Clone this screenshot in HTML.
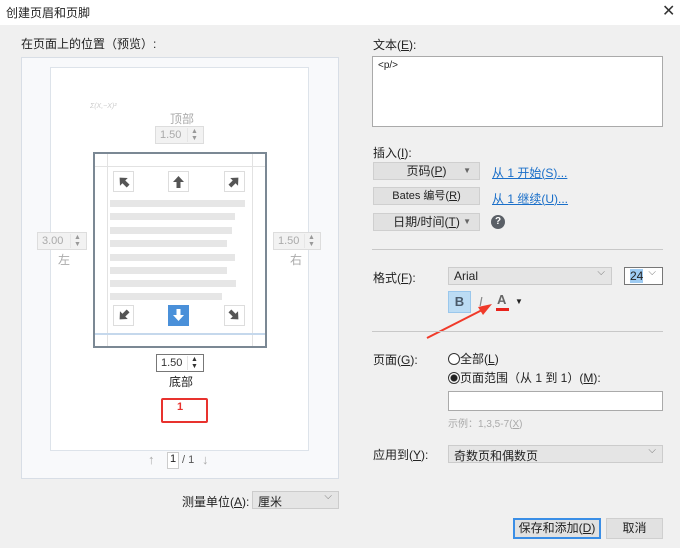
<!DOCTYPE html><html><head><meta charset="utf-8"><style>
*{margin:0;padding:0;box-sizing:border-box}
body{width:680px;height:548px;background:#f0f0f0;position:relative;overflow:hidden;font-family:"Liberation Sans","Noto Sans CJK SC",sans-serif;font-size:12px;color:#222}
.a{position:absolute;white-space:nowrap}
.spin{position:absolute;height:18px;border:1px solid #ddd;background:#f2f2f2;color:#aaa;font-size:11px;padding:2px 4px}
.spin i{position:absolute;right:2px;top:1px;width:14px;height:14px;border-left:1px solid #e6e6e6;font-style:normal;font-size:7px;line-height:7px;text-align:center;color:#999}
.ab{position:absolute;width:21px;height:21px;border:1px solid #ddd;background:#fff}
.ab svg{position:absolute;left:2px;top:2px}
.ln{position:absolute;left:110px;height:7px;background:#e6e6e6}
.btn{position:absolute;left:373px;width:107px;height:18px;background:#e1e1e1;border:1px solid #cfcfcf;font-size:12px;text-align:center;line-height:16px}
.btn b{position:absolute;right:8px;top:0;font-size:8px;color:#666;font-weight:normal}
.lk{position:absolute;left:492px;color:#1a6fc9;text-decoration:underline;font-size:12px}
.sep{position:absolute;left:372px;width:291px;height:1px;background:#c8c8c8}
.dd{position:absolute;height:18px;background:#e5e5e5;border:1px solid #ccc;padding:1px 5px;font-size:12px}
.dd:after{content:"⌵";position:absolute;right:6px;top:-1px;color:#777;font-size:10px}
</style></head><body>
<svg width="0" height="0" style="position:absolute"><defs><g id="ar"><path d="M7.5 2 L13 8 L9.5 8 L9.5 14 L5.5 14 L5.5 8 L2 8 Z"/></g></defs></svg>
<div class="a" style="left:0;top:0;width:680px;height:25px;background:#fff"></div>
<div class="a" style="left:6px;top:4px">创建页眉和页脚</div>
<div class="a" style="left:662px;top:1px;font-size:16px;color:#333">✕</div>

<div class="a" style="left:21px;top:35px">在页面上的位置（预览）:</div>
<div class="a" style="left:21px;top:57px;width:318px;height:422px;background:#f8f9fb;border:1px solid #d8dee6"></div>
<div class="a" style="left:50px;top:67px;width:259px;height:384px;background:#fff;border:1px solid #dde3ea"></div>
<div class="a" style="left:90px;top:103px;font-size:7px;color:#ccc;font-style:italic">Σ(X,−X)²</div>
<div class="a" style="left:170px;top:110px;color:#aaa">顶部</div>
<div class="spin" style="left:155px;top:126px;width:49px">1.50<i>▲<br>▼</i></div>
<div class="spin" style="left:37px;top:232px;width:50px">3.00<i>▲<br>▼</i></div>
<div class="a" style="left:58px;top:251px;color:#aaa">左</div>
<div class="spin" style="left:273px;top:232px;width:48px">1.50<i>▲<br>▼</i></div>
<div class="a" style="left:290px;top:251px;color:#aaa">右</div>

<div class="a" style="left:93px;top:152px;width:174px;height:196px;background:#fff;border:2px solid #7b8894"></div>
<div class="a" style="left:107px;top:154px;width:1px;height:192px;background:#e2e2e2"></div>
<div class="a" style="left:252px;top:154px;width:1px;height:192px;background:#e2e2e2"></div>
<div class="a" style="left:95px;top:166px;width:170px;height:1px;background:#e2e2e2"></div>
<div class="a" style="left:95px;top:333px;width:170px;height:2px;background:#c5d8ec"></div>
<div class="ab" style="left:113px;top:171px"><svg width="15" height="15" fill="#555"><use href="#ar" transform="rotate(-45 7.5 7.5)"/></svg></div>
<div class="ab" style="left:168px;top:171px"><svg width="15" height="15" fill="#555"><use href="#ar"/></svg></div>
<div class="ab" style="left:224px;top:171px"><svg width="15" height="15" fill="#555"><use href="#ar" transform="rotate(45 7.5 7.5)"/></svg></div>
<div class="ln" style="top:200px;width:135px"></div>
<div class="ln" style="top:213px;width:125px"></div>
<div class="ln" style="top:227px;width:122px"></div>
<div class="ln" style="top:240px;width:117px"></div>
<div class="ln" style="top:254px;width:125px"></div>
<div class="ln" style="top:267px;width:117px"></div>
<div class="ln" style="top:280px;width:126px"></div>
<div class="ln" style="top:293px;width:112px"></div>
<div class="ab" style="left:113px;top:305px"><svg width="15" height="15" fill="#555"><use href="#ar" transform="rotate(-135 7.5 7.5)"/></svg></div>
<div class="ab" style="left:168px;top:305px;background:#4a90d9;border-color:#4a90d9"><svg width="15" height="15" fill="#fff"><use href="#ar" transform="rotate(180 7.5 7.5)"/></svg></div>
<div class="ab" style="left:224px;top:305px"><svg width="15" height="15" fill="#555"><use href="#ar" transform="rotate(135 7.5 7.5)"/></svg></div>
<div class="spin" style="left:156px;top:354px;width:48px;background:#fff;border-color:#777;color:#333">1.50<i style="color:#333">▲<br>▼</i></div>
<div class="a" style="left:169px;top:373px">底部</div>
<div class="a" style="left:161px;top:398px;width:47px;height:25px;border:2px solid #e8322e;border-radius:2px"></div>
<div class="a" style="left:177px;top:401px;color:#e8322e;font-size:11px;font-weight:bold">1</div>
<div class="a" style="left:148px;top:452px;color:#aaa;font-size:13px">↑</div>
<div class="a" style="left:167px;top:452px;width:12px;height:17px;border:1px solid #ccc;background:#fff;font-size:11px;text-align:center">1</div>
<div class="a" style="left:182px;top:454px;font-size:11px;color:#555">/ 1</div>
<div class="a" style="left:202px;top:452px;color:#aaa;font-size:13px">↓</div>
<div class="a" style="left:182px;top:493px">测量单位(<u>A</u>):</div>
<div class="dd" style="left:252px;top:491px;width:87px">厘米</div>

<div class="a" style="left:373px;top:36px">文本(<u>E</u>):</div>
<div class="a" style="left:372px;top:56px;width:291px;height:71px;background:#fff;border:1px solid #aaa;padding:3px 5px;font-size:10px">&lt;p/&gt;</div>
<div class="a" style="left:373px;top:144px">插入(<u>I</u>):</div>
<div class="btn" style="top:162px">页码(<u>P</u>)<b>▼</b></div>
<div class="lk" style="top:164px">从 1 开始(<u>S</u>)...</div>
<div class="btn" style="top:187px;font-size:11px">Bates 编号(<u>R</u>)</div>
<div class="lk" style="top:190px">从 1 继续(<u>U</u>)...</div>
<div class="btn" style="top:213px">日期/时间(<u>T</u>)<b>▼</b></div>
<div class="a" style="left:491px;top:215px;width:14px;height:14px;border-radius:50%;background:#5a5f66;color:#fff;font-size:10px;font-weight:bold;text-align:center;line-height:14px">?</div>
<div class="sep" style="top:249px"></div>
<div class="a" style="left:373px;top:269px">格式(<u>F</u>):</div>
<div class="dd" style="left:448px;top:267px;width:164px">Arial</div>
<div class="dd" style="left:624px;top:267px;width:39px;background:#fff;border-color:#777"><span style="background:#9ecbf2">24</span></div>
<div class="a" style="left:448px;top:291px;width:23px;height:22px;background:#bcdcf4;border:1px solid #9ac7ec;color:#4a5a6a;font-weight:bold;font-size:13px;text-align:center;line-height:20px">B</div>
<div class="a" style="left:479px;top:294px;color:#888;font-style:italic;font-size:13px">I</div>
<div class="a" style="left:497px;top:292px;color:#666;font-weight:bold;font-size:13px">A</div>
<div class="a" style="left:496px;top:308px;width:13px;height:3px;background:#e8221b"></div>
<div class="a" style="left:515px;top:297px;font-size:8px">▼</div>
<svg class="a" style="left:420px;top:295px" width="80" height="50"><line x1="7" y1="43" x2="66" y2="13" stroke="#f03a2a" stroke-width="2"/><polygon points="72,9 58,12 63,20" fill="#f03a2a"/></svg>
<div class="sep" style="top:331px"></div>
<div class="a" style="left:373px;top:351px">页面(<u>G</u>):</div>
<div class="a" style="left:448px;top:350px"><span style="display:inline-block;width:12px;height:12px;border:1px solid #333;border-radius:50%;background:#fff;vertical-align:-2px"></span>全部(<u>L</u>)</div>
<div class="a" style="left:448px;top:369px"><span style="display:inline-block;width:12px;height:12px;border:1px solid #333;border-radius:50%;background:radial-gradient(#222 3px,#fff 4px);vertical-align:-2px"></span>页面范围（从 1 到 1）(<u>M</u>):</div>
<div class="a" style="left:448px;top:391px;width:215px;height:20px;background:#fff;border:1px solid #aaa"></div>
<div class="a" style="left:448px;top:415px;color:#aaa;font-size:10px">示例：1,3,5-7(<u>X</u>)</div>
<div class="a" style="left:373px;top:446px">应用到(<u>Y</u>):</div>
<div class="dd" style="left:448px;top:445px;width:215px">奇数页和偶数页</div>
<div class="a" style="left:513px;top:518px;width:88px;height:21px;background:#e1e1e1;border:2px solid #3a8ee6;text-align:center;line-height:17px">保存和添加(<u>D</u>)</div>
<div class="a" style="left:606px;top:518px;width:57px;height:21px;background:#e1e1e1;border:1px solid #cfcfcf;text-align:center;line-height:19px">取消</div>
</body></html>
